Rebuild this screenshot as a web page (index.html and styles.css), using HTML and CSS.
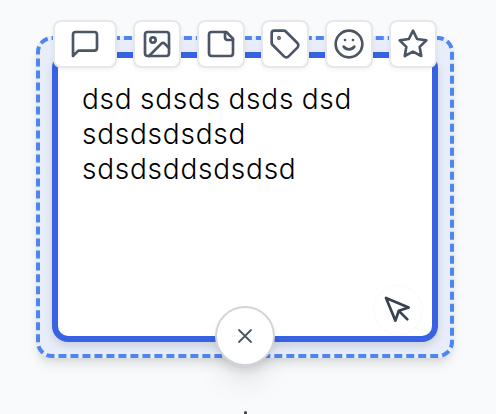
FILE: index.html
```html
<!DOCTYPE html>
<html lang="en">
<head>
<meta charset="utf-8">
<title>Card</title>
<link rel="stylesheet" href="styles.css">
</head>
<body>
<main class="canvas">
  <section class="selection">
    <article class="card">
      <p class="card-text">dsd sdsds dsds dsd<br>sdsdsdsdsd<br>sdsdsddsdsdsd</p>
    </article>
    <nav class="toolbar">
      <button class="tool tool-wide" aria-label="Comment"><svg viewBox="0 0 24 24"><path d="M21 15a2 2 0 0 1-2 2H7l-4 4V5a2 2 0 0 1 2-2h14a2 2 0 0 1 2 2z"/></svg></button>
      <button class="tool" aria-label="Image"><svg viewBox="0 0 24 24"><rect x="3" y="3" width="18" height="18" rx="2"/><circle cx="9" cy="9" r="2"/><path d="m21 15-3.086-3.086a2 2 0 0 0-2.828 0L6 21"/></svg></button>
      <button class="tool" aria-label="Note"><svg viewBox="0 0 24 24"><path d="M16 3H5a2 2 0 0 0-2 2v14a2 2 0 0 0 2 2h14a2 2 0 0 0 2-2V8Z"/><path d="M15 3v4a2 2 0 0 0 2 2h4"/></svg></button>
      <button class="tool" aria-label="Tag"><svg viewBox="0 0 24 24"><path d="M12.586 2.586A2 2 0 0 0 11.172 2H4a2 2 0 0 0-2 2v7.172a2 2 0 0 0 .586 1.414l8.704 8.704a2.426 2.426 0 0 0 3.42 0l6.58-6.58a2.426 2.426 0 0 0 0-3.42z"/><circle class="dot" cx="7.5" cy="7.5" r=".5"/></svg></button>
      <button class="tool" aria-label="Emoji"><svg viewBox="0 0 24 24"><circle cx="12" cy="12" r="10"/><path d="M8 14s1.5 2 4 2 4-2 4-2M9 9h.01M15 9h.01"/></svg></button>
      <button class="tool" aria-label="Favorite"><svg viewBox="0 0 24 24"><path d="m12 2 3.09 6.26L22 9.27l-5 4.87 1.18 6.88L12 17.77l-6.18 3.25L7 14.14 2 9.27l6.91-1.01z"/></svg></button>
    </nav>
    <button class="pointer" aria-label="Select"><svg viewBox="0 0 24 24"><path d="m3 3 7.07 16.97 2.51-7.39 7.39-2.51zM13 13l6 6"/></svg></button>
    <button class="close" aria-label="Close"><svg viewBox="0 0 24 24"><path d="M18 6 6 18M6 6l12 12"/></svg></button>
  </section>
  <span class="anchor"></span>
</main>
</body>
</html>
```
FILE: styles.css
```css
* { box-sizing: border-box; }
body { margin: 0; background: #f9fafb; }
.canvas {
  position: relative;
  width: 496px;
  height: 414px;
  padding: 36px;
  overflow: hidden;
}
.selection {
  position: relative;
  width: 418px;
  height: 322px;
  padding: 12px;
  border: 4px dashed #4f85f0;
  border-radius: 16px;
  background: #e7edf9;
  box-shadow: 0 8px 12px -2px rgba(0, 0, 0, .1), 0 3px 6px -2px rgba(0, 0, 0, .08);
}
.card {
  width: 386px;
  height: 290px;
  padding: 24px;
  border: 6px solid #3762e3;
  border-radius: 16px;
  background: #fff;
  box-shadow: 0 4px 8px rgba(0, 0, 0, .12);
}
.card-text {
  margin: 0;
  font: 300 28px/35px Inter, sans-serif;
  letter-spacing: .75px;
  word-spacing: -1px;
  color: #000;
  white-space: nowrap;
}
.toolbar {
  position: absolute;
  top: -20px;
  left: 13px;
  display: flex;
  gap: 16px;
}
button {
  display: flex;
  align-items: center;
  justify-content: center;
  padding: 0;
  background: #fff;
}
svg {
  width: 32px;
  height: 32px;
  flex: none;
  fill: none;
  stroke: #4b5563;
  stroke-width: 2;
  stroke-linecap: round;
  stroke-linejoin: round;
}
.dot { fill: #4b5563; }
.tool {
  width: 48px;
  height: 48px;
  border: 2px solid #e5e7eb;
  border-radius: 8px;
  box-shadow: 0 2px 4px rgba(0, 0, 0, .05);
}
.tool-wide { width: 64px; }
.pointer {
  position: absolute;
  right: 28px;
  bottom: 20px;
  width: 48px;
  height: 48px;
  border: 0;
  border-radius: 50%;
  box-shadow: 0 0 2px rgba(0, 0, 0, .06);
}
.pointer svg { stroke: #374151; }
.close {
  position: absolute;
  left: 175px;
  bottom: -12px;
  width: 60px;
  height: 60px;
  border: 2px solid #d1d5db;
  border-radius: 50%;
  box-shadow: 0 20px 30px -6px rgba(0, 0, 0, .1), 0 8px 12px -4px rgba(0, 0, 0, .1);
}
.close svg { width: 24px; height: 24px; stroke-width: 1.8; }
.anchor {
  position: absolute;
  left: 243.5px;
  top: 411px;
  width: 3px;
  height: 6px;
  border-radius: 2px;
  background: #444;
}
```
